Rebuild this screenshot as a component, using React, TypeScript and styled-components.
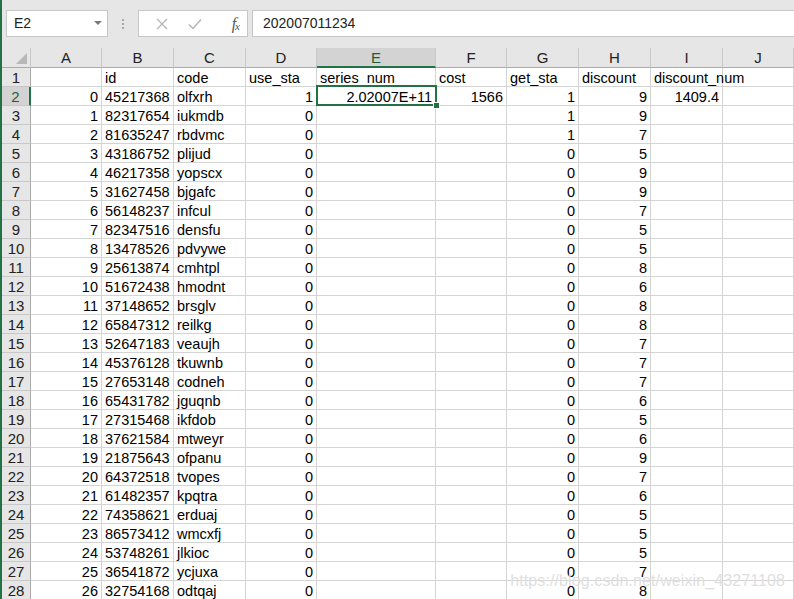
import styled, { createGlobalStyle } from "styled-components";

const GREEN = "#217346";

type Row = [number, string, string, number, string, string, string, string, string];

const rows: Row[] = [
  [0, "45217368", "olfxrh", 1, "2.02007E+11", "1566", "1", "9", "1409.4"],
  [1, "82317654", "iukmdb", 0, "", "", "1", "9", ""],
  [2, "81635247", "rbdvmc", 0, "", "", "1", "7", ""],
  [3, "43186752", "plijud", 0, "", "", "0", "5", ""],
  [4, "46217358", "yopscx", 0, "", "", "0", "9", ""],
  [5, "31627458", "bjgafc", 0, "", "", "0", "9", ""],
  [6, "56148237", "infcul", 0, "", "", "0", "7", ""],
  [7, "82347516", "densfu", 0, "", "", "0", "5", ""],
  [8, "13478526", "pdvywe", 0, "", "", "0", "5", ""],
  [9, "25613874", "cmhtpl", 0, "", "", "0", "8", ""],
  [10, "51672438", "hmodnt", 0, "", "", "0", "6", ""],
  [11, "37148652", "brsglv", 0, "", "", "0", "8", ""],
  [12, "65847312", "reilkg", 0, "", "", "0", "8", ""],
  [13, "52647183", "veaujh", 0, "", "", "0", "7", ""],
  [14, "45376128", "tkuwnb", 0, "", "", "0", "7", ""],
  [15, "27653148", "codneh", 0, "", "", "0", "7", ""],
  [16, "65431782", "jguqnb", 0, "", "", "0", "6", ""],
  [17, "27315468", "ikfdob", 0, "", "", "0", "5", ""],
  [18, "37621584", "mtweyr", 0, "", "", "0", "6", ""],
  [19, "21875643", "ofpanu", 0, "", "", "0", "9", ""],
  [20, "64372518", "tvopes", 0, "", "", "0", "7", ""],
  [21, "61482357", "kpqtra", 0, "", "", "0", "6", ""],
  [22, "74358621", "erduaj", 0, "", "", "0", "5", ""],
  [23, "86573412", "wmcxfj", 0, "", "", "0", "5", ""],
  [24, "53748261", "jlkioc", 0, "", "", "0", "5", ""],
  [25, "36541872", "ycjuxa", 0, "", "", "0", "7", ""],
  [26, "32754168", "odtqaj", 0, "", "", "0", "8", ""],
];

const columns = ["A", "B", "C", "D", "E", "F", "G", "H", "I", "J"];
const headers = ["", "id", "code", "use_sta", "series_num", "cost", "get_sta", "discount", "discount_num", ""];

export default function App() {
  return (
    <Page>
      <GlobalStyle />
      <FormulaBar>
        <NameBox>
          E2
          <Caret />
        </NameBox>
        <Dots>
          <span />
          <span />
          <span />
        </Dots>
        <FxGroup>
          <FxButton $muted>
            <svg width="12" height="12" viewBox="0 0 12 12">
              <path d="M1 1 L11 11 M11 1 L1 11" stroke="#b5b5b5" strokeWidth="1.3" fill="none" />
            </svg>
          </FxButton>
          <FxButton $muted>
            <svg width="14" height="12" viewBox="0 0 14 12">
              <path d="M1 6.5 L5 10.5 L13 1.5" stroke="#b5b5b5" strokeWidth="1.5" fill="none" />
            </svg>
          </FxButton>
          <FxButton>
            <FxText>
              f<sub>x</sub>
            </FxText>
          </FxButton>
        </FxGroup>
        <FormulaInput>202007011234</FormulaInput>
      </FormulaBar>

      <Sheet>
        <Corner>
          <CornerTriangle />
        </Corner>
        {columns.map(c => (
          <ColHeader key={c} $active={c === "E"}>
            {c}
          </ColHeader>
        ))}

        <RowHeader>1</RowHeader>
        {headers.map((h, i) => (
          <Cell key={"h" + i}>{h}</Cell>
        ))}

        {rows.map((r, i) => {
          const rowNum = i + 2;
          const selected = rowNum === 2;
          return [
            <RowHeader key={"rh" + rowNum} $active={selected}>
              {rowNum}
            </RowHeader>,
            <Cell key={rowNum + "a"} $num>{r[0]}</Cell>,
            <Cell key={rowNum + "b"}>{r[1]}</Cell>,
            <Cell key={rowNum + "c"}>{r[2]}</Cell>,
            <Cell key={rowNum + "d"} $num>{r[3]}</Cell>,
            <Cell key={rowNum + "e"} $num $selected={selected}>
              {r[4]}
              {selected && <FillHandle />}
            </Cell>,
            <Cell key={rowNum + "f"} $num>{r[5]}</Cell>,
            <Cell key={rowNum + "g"} $num>{r[6]}</Cell>,
            <Cell key={rowNum + "h"} $num>{r[7]}</Cell>,
            <Cell key={rowNum + "i"} $num>{r[8]}</Cell>,
            <Cell key={rowNum + "j"} />,
          ];
        })}
      </Sheet>
      <Watermark>https://blog.csdn.net/weixin_43271108</Watermark>
    </Page>
  );
}

const GlobalStyle = createGlobalStyle`
  html, body {
    margin: 0;
    padding: 0;
    overflow: hidden;
    background: #fff;
  }
  body {
    font-family: "Liberation Sans", Arial, sans-serif;
  }
`;

const Page = styled.div`
  position: relative;
  width: 794px;
  height: 599px;
  overflow: hidden;
  box-sizing: border-box;
  border-left: 2px solid ${GREEN};
  background: #fff;
  display: flex;
  flex-direction: column;
`;

const FormulaBar = styled.div`
  height: 48px;
  flex: none;
  box-sizing: border-box;
  background: #e6e6e6;
  display: flex;
  align-items: flex-start;
  padding: 10px 0 0 4px;
`;

const NameBox = styled.div`
  position: relative;
  width: 102px;
  height: 27px;
  box-sizing: border-box;
  background: #fff;
  border: 1px solid #c6c6c6;
  font-size: 14px;
  color: #222;
  line-height: 25px;
  padding-left: 7px;
`;

const Caret = styled.span`
  position: absolute;
  right: 5px;
  top: 10px;
  width: 0;
  height: 0;
  border-left: 4px solid transparent;
  border-right: 4px solid transparent;
  border-top: 4px solid #7a7a7a;
`;

const Dots = styled.div`
  width: 30px;
  height: 27px;
  display: flex;
  flex-direction: column;
  align-items: center;
  justify-content: center;
  gap: 2px;

  span {
    width: 2px;
    height: 2px;
    background: #a8a8a8;
  }
`;

const FxGroup = styled.div`
  width: 110px;
  height: 27px;
  box-sizing: border-box;
  background: #fff;
  border: 1px solid #c6c6c6;
  display: flex;
  align-items: center;
  padding-left: 6px;
`;

const FxButton = styled.div<{ $muted?: boolean }>`
  width: ${p => (p.$muted ? "33px" : "36px")};
  height: 25px;
  display: flex;
  align-items: center;
  justify-content: ${p => (p.$muted ? "center" : "flex-end")};
  padding-right: ${p => (p.$muted ? "0" : "8px")};
  box-sizing: border-box;
`;

const FxText = styled.span`
  font-family: "Liberation Serif", "Times New Roman", serif;
  font-style: italic;
  font-size: 16px;
  color: #555;
  letter-spacing: -1px;

  sub {
    font-size: 11px;
    vertical-align: -1px;
  }
`;

const FormulaInput = styled.div`
  flex: 1;
  height: 27px;
  margin-left: 4px;
  box-sizing: border-box;
  background: #fff;
  border: 1px solid #c6c6c6;
  border-right: none;
  font-size: 14px;
  color: #222;
  line-height: 25px;
  padding-left: 10px;
`;

const Sheet = styled.div`
  display: grid;
  grid-template-columns: 29px 71px 72px 72px 71px 119px 71px 72px 72px 72px 1fr;
  grid-template-rows: 20px;
  grid-auto-rows: 19px;
  font-size: 14.5px;
  color: #000;
`;

const Corner = styled.div`
  position: relative;
  background: #e6e6e6;
  border-right: 1px solid #c8c8c8;
  border-bottom: 1px solid #ababab;
`;

const CornerTriangle = styled.div`
  position: absolute;
  right: 3px;
  bottom: 3px;
  width: 0;
  height: 0;
  border-left: 11px solid transparent;
  border-bottom: 11px solid #b8b8b8;
`;

const ColHeader = styled.div<{ $active?: boolean }>`
  box-sizing: border-box;
  background: ${p => (p.$active ? "#d3d3d3" : "#e6e6e6")};
  border-right: 1px solid #c8c8c8;
  border-bottom: ${p => (p.$active ? `2px solid ${GREEN}` : "1px solid #ababab")};
  color: ${p => (p.$active ? "#1d5e39" : "#222")};
  text-align: center;
  line-height: 20px;
  font-size: 15px;
`;

const RowHeader = styled.div<{ $active?: boolean }>`
  box-sizing: border-box;
  background: ${p => (p.$active ? "#d3d3d3" : "#e6e6e6")};
  border-right: ${p => (p.$active ? `2px solid ${GREEN}` : "1px solid #ababab")};
  border-bottom: 1px solid #c8c8c8;
  color: ${p => (p.$active ? "#1d5e39" : "#222")};
  text-align: center;
  line-height: 19px;
  font-size: 15px;
`;

const Cell = styled.div<{ $num?: boolean; $selected?: boolean }>`
  position: relative;
  box-sizing: border-box;
  border-right: 1px solid #d4d4d4;
  border-bottom: 1px solid #d4d4d4;
  text-align: ${p => (p.$num ? "right" : "left")};
  padding: ${p => (p.$num ? "1px 3px 0 0" : "1px 0 0 3px")};
  line-height: 19px;
  white-space: nowrap;
  overflow: visible;

  ${p =>
    p.$selected &&
    `
    &::after {
      content: "";
      position: absolute;
      left: -1px;
      top: -2px;
      right: -2px;
      bottom: -1px;
      border: 2px solid ${GREEN};
      pointer-events: none;
    }
  `}
`;

const FillHandle = styled.span`
  position: absolute;
  right: -5px;
  bottom: -4px;
  width: 5px;
  height: 5px;
  background: ${GREEN};
  border: 1px solid #fff;
  z-index: 2;
`;

const Watermark = styled.div`
  position: absolute;
  right: 9px;
  bottom: 9px;
  font-family: "Liberation Sans", Arial, sans-serif;
  font-size: 16px;
  color: rgba(200, 200, 200, 0.6);
  text-shadow: 0 0 1px rgba(255, 255, 255, 0.9);
  pointer-events: none;
  letter-spacing: 0.1px;
`;
